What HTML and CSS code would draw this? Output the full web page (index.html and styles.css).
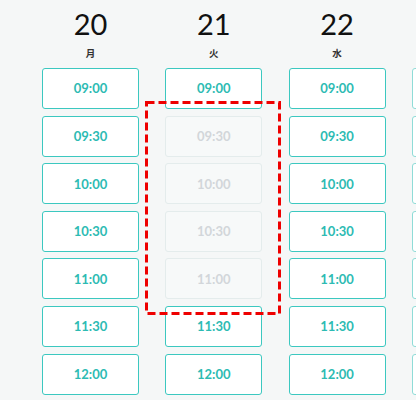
FILE: index.html
```html
<!DOCTYPE html>
<html>
<head>
<meta charset="utf-8">
<link rel="stylesheet" href="styles.css">
</head>
<body>
<div class="board">
  <div class="col">
    <div class="head"><div class="num">20</div><div class="dow">月</div></div>
    <div class="slot">09:00</div>
    <div class="slot">09:30</div>
    <div class="slot">10:00</div>
    <div class="slot">10:30</div>
    <div class="slot">11:00</div>
    <div class="slot">11:30</div>
    <div class="slot">12:00</div>
  </div>
  <div class="col">
    <div class="head"><div class="num">21</div><div class="dow">火</div></div>
    <div class="slot">09:00</div>
    <div class="slot off">09:30</div>
    <div class="slot off">10:00</div>
    <div class="slot off">10:30</div>
    <div class="slot off">11:00</div>
    <div class="slot">11:30</div>
    <div class="slot">12:00</div>
  </div>
  <div class="col">
    <div class="head"><div class="num">22</div><div class="dow">水</div></div>
    <div class="slot">09:00</div>
    <div class="slot">09:30</div>
    <div class="slot">10:00</div>
    <div class="slot">10:30</div>
    <div class="slot">11:00</div>
    <div class="slot">11:30</div>
    <div class="slot">12:00</div>
  </div>
  <div class="col faded">
    <div class="head"></div>
    <div class="slot"></div>
    <div class="slot"></div>
    <div class="slot"></div>
    <div class="slot"></div>
    <div class="slot"></div>
    <div class="slot"></div>
    <div class="slot"></div>
  </div>
  <svg class="mark" width="136" height="214" viewBox="0 0 136 214">
    <rect x="1.5" y="1.5" width="133" height="211" fill="none" stroke="#ee0000" stroke-width="3" stroke-dasharray="8 4"/>
  </svg>
</div>
</body>
</html>
```

FILE: styles.css
```css
html, body {
  margin: 0;
  padding: 0;
  background: #f5f7f7;
  overflow: hidden;
}
body {
  width: 416px;
  height: 400px;
  font-family: "Lato", "Noto Sans CJK JP", sans-serif;
}
.board {
  position: relative;
  display: flex;
  gap: 26.3px;
  padding-left: 42px;
  padding-top: 7px;
}
.col {
  flex: 0 0 97px;
  display: flex;
  flex-direction: column;
  gap: 6.6px;
}
.head {
  height: 54.4px;
  display: flex;
  flex-direction: column;
  align-items: center;
}
.num {
  font-size: 29px;
  line-height: 34px;
  color: #111;
}
.dow {
  font-family: "Noto Sans CJK JP", sans-serif;
  font-size: 9.5px;
  font-weight: 700;
  line-height: 12px;
  margin-top: 6px;
  color: #333;
}
.slot {
  box-sizing: border-box;
  height: 41px;
  background: #fff;
  border: 1px solid #3cc8c0;
  border-radius: 3px;
  display: flex;
  align-items: center;
  justify-content: center;
  font-size: 13px;
  font-weight: 700;
  color: #2dbbb3;
}
.slot.off {
  background: #f7f9f9;
  border-color: #e4ecec;
  color: #d2d6da;
}
.faded .slot {
  border-color: #8fdcd7;
}
.mark {
  position: absolute;
  left: 145px;
  top: 101px;
}
```
